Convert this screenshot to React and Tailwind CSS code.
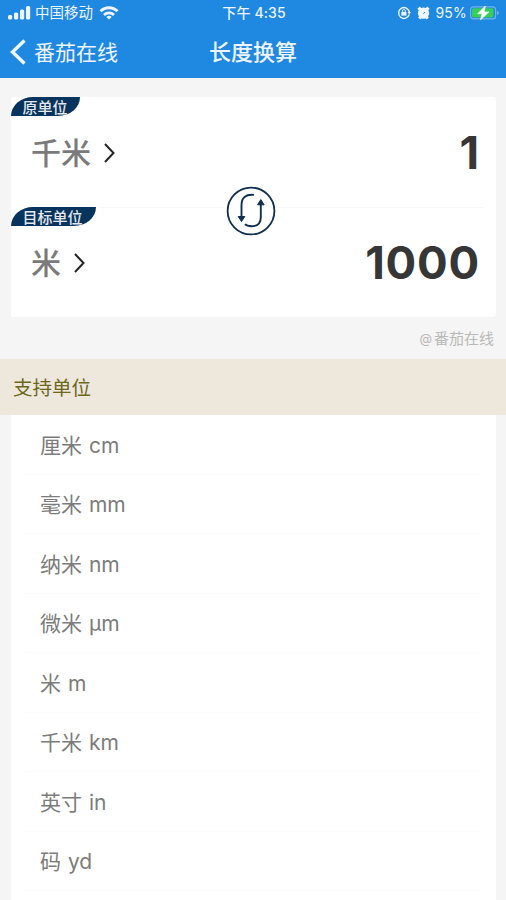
const units = ['厘米 cm', '毫米 mm', '纳米 nm', '微米 μm', '米 m', '千米 km', '英寸 in', '码 yd']

function StatusBar() {
  return (
    <div className="grid h-[26px] grid-cols-[1fr_auto_1fr] items-center pr-[6px] pl-2 text-[14px] leading-none font-medium">
      <div className="flex items-center">
        <svg width="23" height="14" viewBox="0 0 23 14" fill="currentColor">
          <rect x="0" y="9" width="4.2" height="4.5" rx="1.5" />
          <rect x="6" y="6.5" width="4.2" height="7" rx="1.5" />
          <rect x="12" y="3.5" width="4.2" height="10" rx="1.5" />
          <rect x="18" y="0" width="4.2" height="13.5" rx="1.5" />
        </svg>
        <span className="ml-1 w-[60px] pt-px text-[14.5px] font-normal whitespace-nowrap">中国移动</span>
        <svg className="ml-[4px]" width="20" height="14" viewBox="0 0 20 14" fill="none" stroke="currentColor" strokeWidth="2.8">
          <path d="M1.5 5.3a12 12 0 0 1 17 0" />
          <path d="M5 8.9a7.2 7.2 0 0 1 10 0" />
          <path d="M10 13.6 7.3 10.9a4 4 0 0 1 5.4 0z" fill="currentColor" stroke="none" />
        </svg>
      </div>
      <span className="tracking-[0.1px]">下午 4:35</span>
      <div className="flex items-center justify-end">
        <svg width="14" height="14" viewBox="0 0 14 14" fill="none" stroke="currentColor" strokeWidth="1.4">
          <path d="M12.2 8.5A5.4 5.4 0 1 1 12.4 6.6" />
          <path d="M10.6 6h3.2l-1.5 2.4z" fill="currentColor" stroke="none" />
          <rect x="4.4" y="6" width="5" height="3.6" fill="currentColor" stroke="none" />
          <path d="M5.4 6.2V5a1.5 1.5 0 0 1 3 0v1.2" strokeWidth="1" />
        </svg>
        <svg className="ml-[6px]" width="13" height="14" viewBox="0 0 13 14" fill="currentColor">
          <circle cx="6.5" cy="7.2" r="5.6" />
          <path d="M1.4 3.8 3.8 1.6M11.6 3.8 9.2 1.6M2.2 12.6l1.6-1.8M10.8 12.6l-1.6-1.8" stroke="currentColor" strokeWidth="3" />
          <path d="M6.3 7.6 8 6" stroke="#1f88e0" strokeWidth="1" />
        </svg>
        <span className="ml-[5px] text-[14px] font-normal tracking-[0.2px]">95%</span>
        <svg className="ml-[3px]" width="30" height="14" viewBox="0 0 30 14">
          <rect x="0.6" y="0.9" width="25" height="12" rx="3" fill="none" stroke="#75b4eb" strokeWidth="1.1" />
          <rect x="2" y="2.3" width="21.5" height="9.2" rx="1.8" fill="#36cf5b" />
          <path d="M27 4.8c2.5.8 2.5 3.4 0 4.3z" fill="#75b4eb" />
          <path d="M15.3 0 7.6 7.8h4.5L10.4 14 18.9 6h-4.7z" fill="#fff" stroke="#fff" strokeWidth=".6" />
        </svg>
      </div>
    </div>
  )
}

function SwapIcon() {
  return (
    <svg width="50" height="50" viewBox="0 0 50 50" fill="none" stroke="#112f50" strokeWidth="1.9">
      <circle cx="25" cy="25" r="23.4" fill="#fff" strokeWidth="1.8" />
      <path d="M28 8.9C19.500 8 15.500 12 15.500 19v12" />
      <path d="M19 38.2c1.5 1.7 4 2.1 6.5 2.1 6 0 9.3-3.2 9.3-9.3V17" />
      <path d="M12.2 30.500h6.600L15.500 35.500zM31.500 18.8h6.600l-3.300-5.200z" fill="#112f50" strokeWidth="1" />
    </svg>
  )
}

function UnitRow({ tag, tagClass, unit, value }) {
  return (
    <div className="h-[110px]">
      <div
        className={`flex h-[19px] items-center bg-[#07345c] pt-px pl-[11.5px] text-[15px] leading-none font-medium text-[#e4e9ef] [border-radius:22px_0_22px_0/19px_0_19px_0] ${tagClass}`}
      >
        {tag}
      </div>
      <div className="flex h-[73px] items-center justify-between pr-[16px] pl-5">
        <div className="flex items-center text-[30px] leading-none font-medium text-[#7a7a7a]">
          {unit}
          <svg className="ml-[13px]" width="11" height="20" viewBox="0 0 11 20" fill="none" stroke="#222" strokeWidth="2">
            <path d="m1 1 8.5 9L1 19" />
          </svg>
        </div>
        <span className="text-[45.5px] leading-none font-bold tracking-[0.8px] text-[#363636]">{value}</span>
      </div>
    </div>
  )
}

export default function App() {
  return (
    <div className="h-[900px] w-[506px] overflow-hidden bg-[#f5f5f5] font-['Inter','Noto_Sans_CJK_SC',sans-serif]">
      <header className="h-[78px] bg-[#1f88e0] text-[#eef5ff]">
        <StatusBar />
        <div className="grid h-[52px] grid-cols-[1fr_auto_1fr] items-center pl-[10px] text-[21px] leading-none">
          <div className="flex items-center">
            <svg width="16" height="26" viewBox="0 0 16 26" fill="none" stroke="currentColor" strokeWidth="3.4">
              <path d="M14.5 1.5 2.5 13l12 11.5" />
            </svg>
            <span className="ml-[8px]">番茄在线</span>
          </div>
          <h1 className="mr-[10px] text-[22px] font-medium">长度换算</h1>
        </div>
      </header>

      <section className="relative mt-[19px] mr-[10px] ml-[11px] h-[220px] rounded-[3px] bg-white">
        <UnitRow tag="原单位" tagClass="w-[69px]" unit="千米" value="1" />
        <UnitRow tag="目标单位" tagClass="w-[85px]" unit="米" value="1000" />
        <div className="absolute top-[110px] right-[12px] left-[89px] h-px bg-[#f7f7f7]" />
        <div className="absolute top-[89px] left-[215px]">
          <SwapIcon />
        </div>
      </section>

      <p className="flex h-[42px] items-center justify-end pr-[12px] text-[15px] leading-none text-[#b9b9b9]">
        <span className="mr-[2px] text-[13px]">@</span>番茄在线
      </p>

      <h2 className="flex h-[56px] items-center bg-[#eee7dc] pt-[4px] pl-[13px] text-[19.5px] leading-none text-[#6c6819]">支持单位</h2>
      <ul className="mr-[10px] ml-[11px] bg-white px-[14px]">
        {units.map((unit) => (
          <li
            key={unit}
            className="flex h-[59.5px] items-center border-b border-[#fcfcfc] pt-[2px] pl-[15px] text-[21px] leading-none [word-spacing:1px] text-[#7c7c7c]"
          >
            {unit}
          </li>
        ))}
        <li className="h-5" />
      </ul>
    </div>
  )
}
